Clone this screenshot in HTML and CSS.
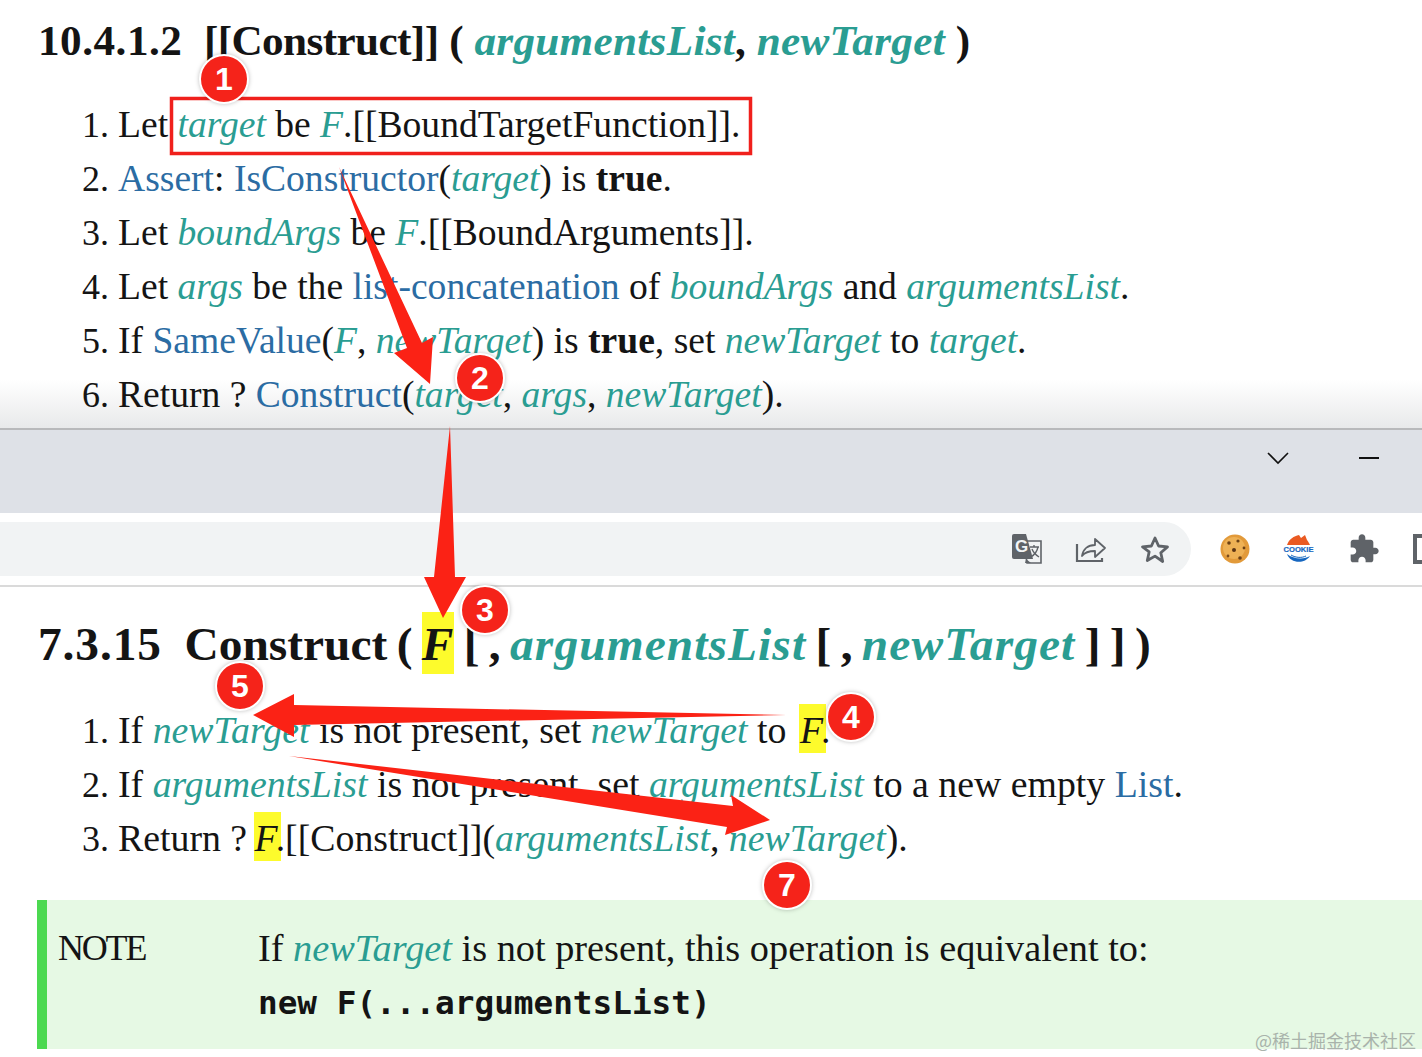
FILE: index.html
```html
<!DOCTYPE html>
<html lang="en">
<head>
<meta charset="utf-8">
<title>Construct</title>
<link rel="stylesheet" href="styles.css">
</head>
<body>
<div class="page">
  <section class="top">
    <h1 class="h-small"><span class="secnum">10.4.1.2</span>&nbsp; <span class="title">[[Construct]]</span> ( <i class="v">argumentsList</i>, <i class="v">newTarget</i> )</h1>
    <ol class="steps">
      <li>Let <i class="v">target</i> be <i class="v">F</i>.[[BoundTargetFunction]].</li>
      <li><a>Assert</a>: <a>IsConstructor</a>(<i class="v">target</i>) is <b>true</b>.</li>
      <li>Let <i class="v">boundArgs</i> be <i class="v">F</i>.[[BoundArguments]].</li>
      <li>Let <i class="v">args</i> be the <a>list-concatenation</a> of <i class="v">boundArgs</i> and <i class="v">argumentsList</i>.</li>
      <li>If <a>SameValue</a>(<i class="v">F</i>, <i class="v">newTarget</i>) is <b>true</b>, set <i class="v">newTarget</i> to <i class="v">target</i>.</li>
      <li>Return ? <a>Construct</a>(<i class="v">target</i>, <i class="v">args</i>, <i class="v">newTarget</i>).</li>
    </ol>
  </section>
  <section class="chrome">
    <div class="tabstrip">
      <svg class="win-ico" width="24" height="14" viewBox="0 0 24 14"><path d="M2 2l10 10L22 2" fill="none" stroke="#111" stroke-width="1.6"/></svg>
      <span class="win-min"></span>
    </div>
    <div class="toolbar">
      <div class="omnibox">
        <svg width="30" height="30" viewBox="0 0 30 30"><path d="M12 7h17v22H15z" fill="#f1f3f4" stroke="#5f6368" stroke-width="1.6"/><path d="M2 0h12l7 25H2a2 2 0 0 1-2-2V2a2 2 0 0 1 2-2z" fill="#5f6368"/><path d="M14 25l-1 4h6z" fill="#5f6368"/><text class="gx" x="3" y="18">G</text><path d="M18 13h9M22 11v2M26 13c-1 5-4 8-7 10M20 15c1 3 4 6 7 8" fill="none" stroke="#5f6368" stroke-width="1.400"/></svg>
        <svg width="32" height="28" viewBox="0 0 32 28"><path d="M2 9v17h25v-3" fill="none" stroke="#5f6368" stroke-width="2.200"/><path d="M7 21c1-7 6-11 13-11V4l10 9-10 9v-6c-6 0-10 1-13 5z" fill="none" stroke="#5f6368" stroke-width="1.800" stroke-linejoin="round"/></svg>
        <svg width="30" height="28" viewBox="0 0 30 28"><path d="M15 3l3.600 8 8.900.9-6.700 5.900 1.900 8.700L15 21.100l-7.700 4.400 1.900-8.700L2.500 11.900l8.900-.9z" fill="none" stroke="#5f6368" stroke-width="2.800" stroke-linejoin="round"/></svg>
      </div>
      <div class="exts">
        <svg width="30" height="30" viewBox="0 0 30 30"><circle cx="15" cy="15" r="14.500" fill="#e29a3a"/><circle cx="14" cy="14" r="11" fill="#eeb155"/><circle cx="9" cy="9" r="1.800" fill="#6b4015"/><circle cx="18" cy="7" r="1.600" fill="#6b4015"/><circle cx="14" cy="16" r="2" fill="#5b3414"/><circle cx="24" cy="14" r="1.400" fill="#6b4015"/><circle cx="8" cy="22" r="1.400" fill="#7a4a1c"/><circle cx="20" cy="24" r="1.800" fill="#6b4015"/></svg>
        <svg width="32" height="30" viewBox="0 0 32 30"><path d="M4 11C6 5 11 2 16 1l2 3 4-3 2 5c1 1 2 3 3 5z" fill="#ea5a22"/><text class="ck-t" x="0.500" y="18">COOKIE</text><path d="M4 20c3 9 17 11 23 2-6 4-17 3-23-2z" fill="#1767c0"/><path d="M8 21c5 3 11 3 15 1" fill="none" stroke="#1767c0" stroke-width="1"/></svg>
        <svg width="32" height="32" viewBox="0 0 24 24"><path d="M20.500 11H19V7c0-1.100-.9-2-2-2h-4V3.500C13 2.120 11.880 1 10.500 1S8 2.120 8 3.500V5H4c-1.100 0-1.990.9-1.990 2v3.800H3.500c1.490 0 2.700 1.210 2.700 2.700s-1.210 2.700-2.700 2.700H2V20c0 1.100.9 2 2 2h3.800v-1.500c0-1.490 1.210-2.700 2.700-2.700 1.490 0 2.700 1.210 2.700 2.700V22H17c1.100 0 2-.9 2-2v-4h1.500c1.380 0 2.500-1.120 2.500-2.500S21.880 11 20.500 11z" fill="#5f6368"/></svg>
        <span class="sidebar-ico"></span>
      </div>
    </div>
  </section>
  <section class="bottom">
    <h1 class="h-big"><span class="secnum">7.3.15</span>&nbsp; Construct ( <i class="hl">F</i> [ , <i class="v">argumentsList</i> [ , <i class="v">newTarget</i> ] ] )</h1>
    <ol class="steps">
      <li>If <i class="v">newTarget</i> is not present, set <i class="v">newTarget</i> to <i class="hl push">F</i><span class="tuck">.</span></li>
      <li>If <i class="v">argumentsList</i> is not present, set <i class="v">argumentsList</i> to a new empty <a>List</a>.</li>
      <li>Return ? <i class="hl pull">F</i><span class="tuck">.</span>[[Construct]](<i class="v">argumentsList</i>, <i class="v">newTarget</i>).</li>
    </ol>
    <div class="note">
      <div class="note-label">NOTE</div>
      <div class="note-body">
        <p>If <i class="v">newTarget</i> is not present, this operation is equivalent to:</p>
        <pre>new F(...argumentsList)</pre>
      </div>
    </div>
  </section>
  <div class="wm">@稀土掘金技术社区</div>
  <svg class="marks" width="1422" height="1057" viewBox="0 0 1422 1057">
    <rect x="171.500" y="98.500" width="579" height="55" fill="none" stroke="#f0201c" stroke-width="3.500"/>
    <g fill="#fb2215">
      <path d="M339 167L407 348 394 353 430 384 433 337 422 343z"/>
      <path d="M450 426L455 577H466L443 618 424 577H434z"/>
      <path d="M786 715L294 705V694L253 715 294 737 294 725z"/>
      <path d="M289 756L733 806 731 795 770 820 725 835 727 827z"/>
    </g>
    <g class="badge">
      <circle cx="224" cy="79" r="24"/><text x="224" y="90">1</text>
      <circle cx="480" cy="378" r="24"/><text x="480" y="389">2</text>
      <circle cx="485" cy="610" r="24"/><text x="485" y="621">3</text>
      <circle cx="851" cy="717" r="24"/><text x="851" y="728">4</text>
      <circle cx="240" cy="686" r="24"/><text x="240" y="697">5</text>
      <circle cx="787" cy="885" r="24"/><text x="787" y="896">7</text>
    </g>
  </svg>
</div>
</body>
</html>
```
FILE: styles.css
```css
* { box-sizing: border-box; }
html, body { margin: 0; padding: 0; background: #fff; }
body { width: 1422px; height: 1057px; overflow: hidden; font-family: "Liberation Serif", serif; color: #141414; }
.page { position: relative; width: 1422px; height: 1057px; overflow: hidden; }
.top { height: 428px; padding: 17px 0 0 38px; overflow: hidden; background: linear-gradient(#fff 380px, #e8e9ea 428px); }
.h-small { margin: 0; font-size: 43.200px; line-height: 48px; font-weight: 700; white-space: nowrap; }
.h-small .secnum { letter-spacing: .5px; }
.h-small .title { letter-spacing: -.6px; }
.h-small .v { letter-spacing: .3px; }
.h-big { margin: 0 0 0 38px; font-size: 47.400px; line-height: 52px; font-weight: 700; white-space: nowrap; word-spacing: -2.500px; }
.h-big .secnum { letter-spacing: .9px; margin-right: 4px; }
.h-big .v { letter-spacing: 1.100px; }
.steps { margin: 0; padding: 0; list-style: decimal; line-height: 54px; white-space: nowrap; }
.steps li::marker { font-size: 36px; }
.top .steps { margin-top: 33px; padding-left: 80px; font-size: 37.600px; }
.bottom .steps { margin-top: 33px; padding-left: 118px; font-size: 37.800px; }
.steps a { color: #2b6ca3; }
.v { color: #2a9d92; }
.hl { background: #fdfb2c; color: #141414; padding: 5px 3px 2px 1px; }
.push { margin-left: 3px; }
.pull { margin-left: -3px; }
.h-big .hl { padding: 6px 1px 4px 0; }
.tuck { margin-left: -5px; }
.chrome { height: 159px; border-top: 2px solid #b8b9bb; display: flex; flex-direction: column; background: #fff; }
.tabstrip { height: 83px; background: #dee1e7; display: flex; justify-content: flex-end; align-items: center; gap: 69px; padding: 0 43px 28px 0; }
.win-min { width: 20px; height: 2px; background: #111; }
.win-ico { display: block; }
.toolbar { height: 74px; display: flex; align-items: flex-start; border-bottom: 2px solid #dadada; padding-top: 9px; }
.omnibox { width: 1191px; height: 54px; background: #f1f3f4; border-radius: 0 27px 27px 0; display: flex; justify-content: flex-end; align-items: center; gap: 33px; padding-right: 21px; }
.exts { flex: 1; display: flex; align-items: center; height: 54px; padding-left: 29px; gap: 33px; overflow: hidden; }
.exts svg { flex: none; }
.sidebar-ico { flex: none; width: 24px; height: 30px; border: 4px solid #5f6368; }
.gx { font: 700 17px "Liberation Sans", sans-serif; fill: #f1f3f4; }
.ck-t { font: 700 7.600px "Liberation Sans", sans-serif; fill: #1767c0; stroke: #1767c0; stroke-width: .2px; }
.bottom { padding-top: 31px; }
.note { margin: 35px 0 0 37px; height: 149px; background: #e6f9e4; border-left: 10px solid #4cd950; display: flex; font-size: 38.300px; line-height: 54px; padding-top: 21px; }
.note-label { width: 211px; padding-left: 11px; flex: none; font-size: 36px; letter-spacing: -2.200px; }
.note-body { white-space: nowrap; }
.note-body p { margin: 0; }
.note-body pre { margin: 1px 0 0; font: 700 32.700px/54px "DejaVu Sans Mono", monospace; }
.wm { position: absolute; right: 6px; bottom: 5px; font: 18px/24px "Noto Sans CJK SC", "Liberation Serif", serif; color: #a9b3ab; }
.marks { position: absolute; left: 0; top: 0; pointer-events: none; }
.badge circle { fill: #f5231a; stroke: #fff; stroke-width: 2; filter: drop-shadow(0 0 2px rgba(0,0,0,.25)); }
.badge text { font: 700 32px "Liberation Sans", sans-serif; fill: #fff; text-anchor: middle; }
```
